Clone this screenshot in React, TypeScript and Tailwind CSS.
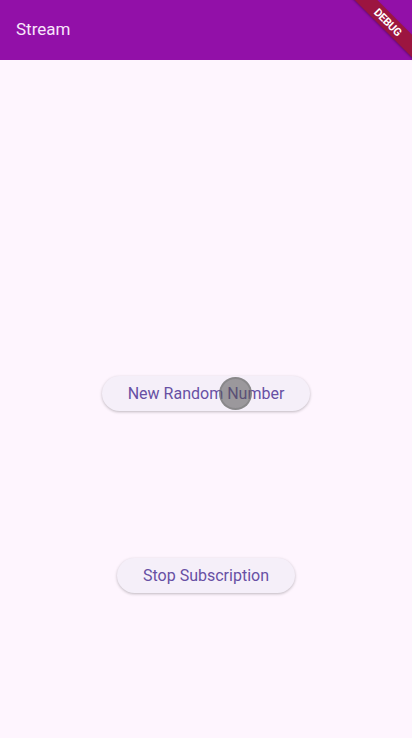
import React from 'react';

export default function App() {
  return (
    <div
      className="relative w-[412px] h-[738px] overflow-hidden bg-[#fef5fe] flex flex-col"
      style={{ fontFamily: 'Roboto, "Noto Sans", sans-serif' }}
    >
      {/* App bar */}
      <div className="h-[60px] bg-[#9210a8] flex items-center px-4 shrink-0">
        <h1 className="text-[17px] text-[#f8e6fb] tracking-normal">Stream</h1>
      </div>

      {/* Body */}
      <div className="flex flex-col items-center">
        <button className="relative mt-[316px] h-[35px] px-[26px] rounded-full bg-[#f5eff9] text-[#6750a4] text-[16px] shadow-[0_1px_3px_rgba(0,0,0,0.25)] overflow-hidden">
          New Random Number
          <span className="absolute left-[117px] top-[1px] w-[33px] h-[33px] rounded-full bg-[rgba(80,80,80,0.55)] border-2 border-[rgba(120,120,120,0.5)]" />
        </button>
        <button className="mt-[147px] h-[35px] px-[26px] rounded-full bg-[#f5eff9] text-[#6750a4] text-[16px] shadow-[0_1px_3px_rgba(0,0,0,0.25)]">
          Stop Subscription
        </button>
      </div>

      {/* Debug banner */}
      <div className="absolute top-[14px] right-[-41px] w-[130px] h-[16px] rotate-45 bg-[#9c1540] flex items-center justify-center shadow-[0_1px_2px_rgba(0,0,0,0.3)]">
        <span className="text-white text-[11px] font-bold leading-none tracking-tight">DEBUG</span>
      </div>
    </div>
  );
}
